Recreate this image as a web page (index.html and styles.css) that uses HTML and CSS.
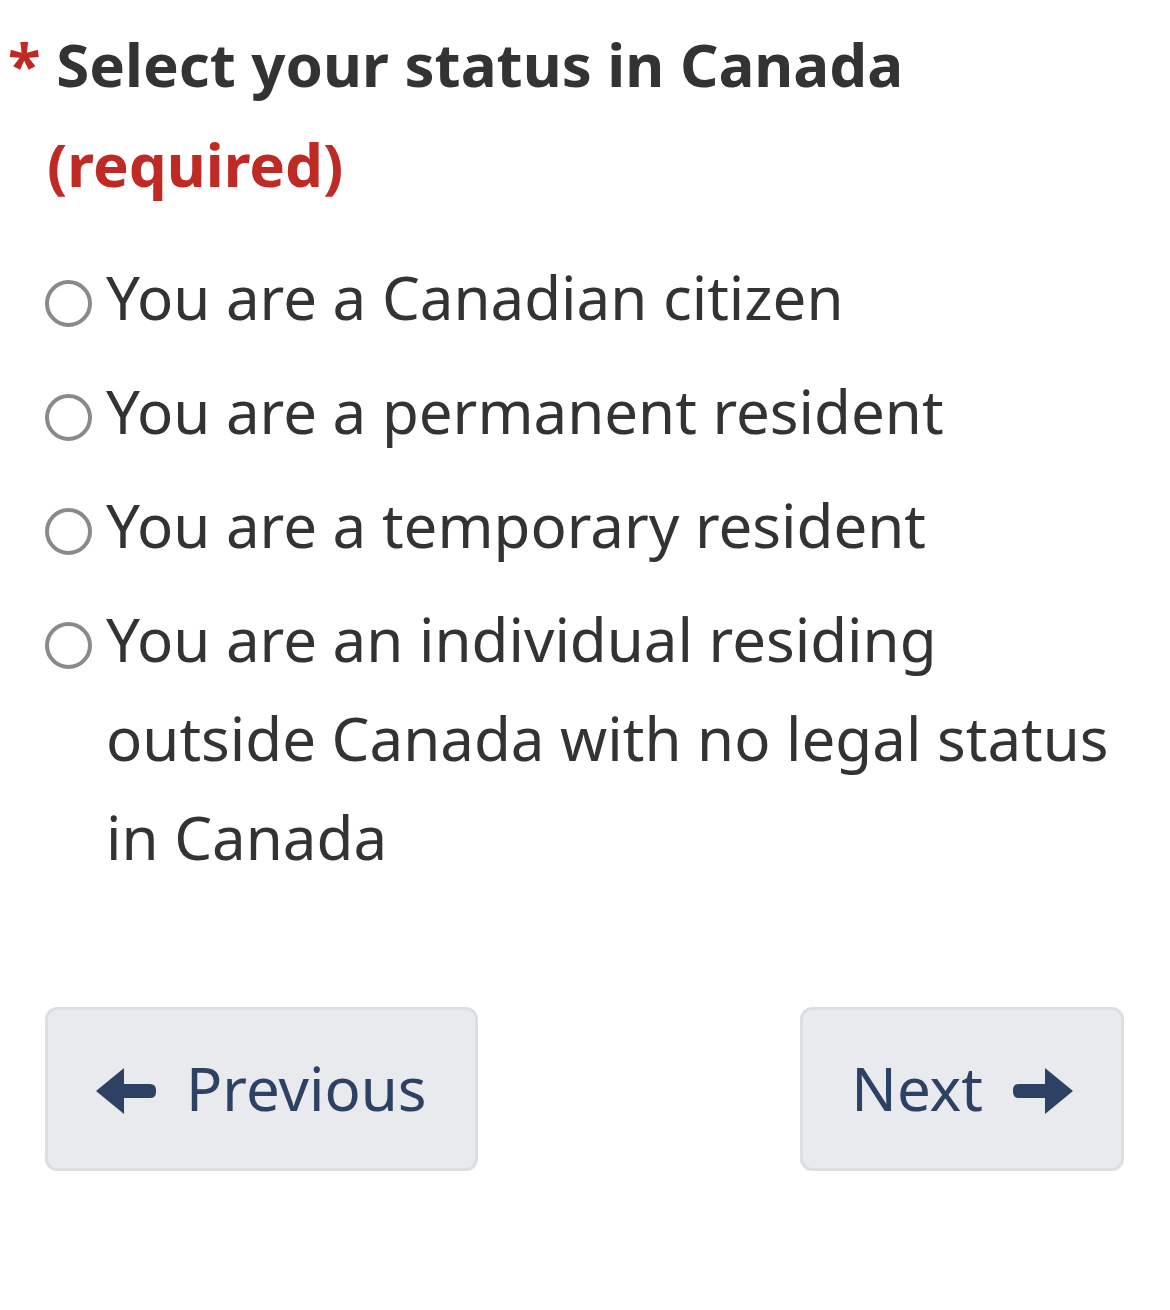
FILE: index.html
```html
<!DOCTYPE html>
<html lang="en">
<head>
<meta charset="utf-8">
<title>Select your status in Canada</title>
<link rel="stylesheet" href="styles.css">
</head>
<body>
<form class="page">
  <fieldset class="group">
    <legend class="legend"><span class="asterisk">*</span> Select your status in Canada <span class="required">(required)</span></legend>
    <ul class="options">
      <li class="option"><span class="radio"></span><span class="option-text">You are a Canadian citizen</span></li>
      <li class="option"><span class="radio"></span><span class="option-text">You are a permanent resident</span></li>
      <li class="option"><span class="radio"></span><span class="option-text">You are a temporary resident</span></li>
      <li class="option"><span class="radio"></span><span class="option-text">You are an individual residing outside Canada with no legal status in Canada</span></li>
    </ul>
  </fieldset>
  <div class="actions">
    <button type="button" class="btn">
      <svg class="arrow" viewBox="0 0 60 46" width="60" height="46" aria-hidden="true"><path d="M0 23 L28 0 L28 16 L54 16 Q60 16 60 22 L60 24 Q60 30 54 30 L28 30 L28 46 Z"/></svg>
      <span>Previous</span>
    </button>
    <button type="button" class="btn">
      <span>Next</span>
      <svg class="arrow" viewBox="0 0 60 46" width="60" height="46" aria-hidden="true"><path d="M60 23 L32 0 L32 16 L6 16 Q0 16 0 22 L0 24 Q0 30 6 30 L32 30 L32 46 Z"/></svg>
    </button>
  </div>
</form>
</body>
</html>
```

FILE: styles.css
```css
html, body {
  margin: 0;
  padding: 0;
  background: #ffffff;
}

body {
  font-family: "Noto Sans", "Open Sans", sans-serif;
  color: #333333;
}

.page {
  padding: 14px 46px 0 45px;
}

.group {
  border: 0;
  margin: 0;
  padding: 0;
  min-width: 0;
}

.legend {
  padding: 0 0 0 2px;
  text-indent: -39px;
  font-size: 60px;
  font-weight: 700;
  line-height: 100px;
  color: #333333;
}

.asterisk,
.required {
  color: #bf2a24;
}

.options {
  list-style: none;
  margin: 34px 0 0 0;
  padding: 0;
  display: flex;
  flex-direction: column;
  gap: 15px;
}

.option {
  display: flex;
  align-items: flex-start;
  gap: 14px;
  font-size: 60px;
  line-height: 99px;
}

.radio {
  flex: none;
  width: 39px;
  height: 39px;
  margin-top: 32px;
  border: 4px solid #8a8a8a;
  border-radius: 50%;
  background: #ffffff;
}

.option-text {
  flex: 1;
}

.actions {
  margin-top: 120px;
  display: flex;
  justify-content: space-between;
}

.btn {
  display: flex;
  align-items: center;
  gap: 30px;
  padding: 29px 48px 30px 48px;
  border: 3px solid #dcdee1;
  border-radius: 12px;
  background: #e9eaed;
  color: #2c4163;
  font-family: "Noto Sans", "Open Sans", sans-serif;
  font-size: 60px;
  line-height: 99px;
}

.arrow {
  fill: #2c4163;
  flex: none;
  margin-top: 4px;
}
```
